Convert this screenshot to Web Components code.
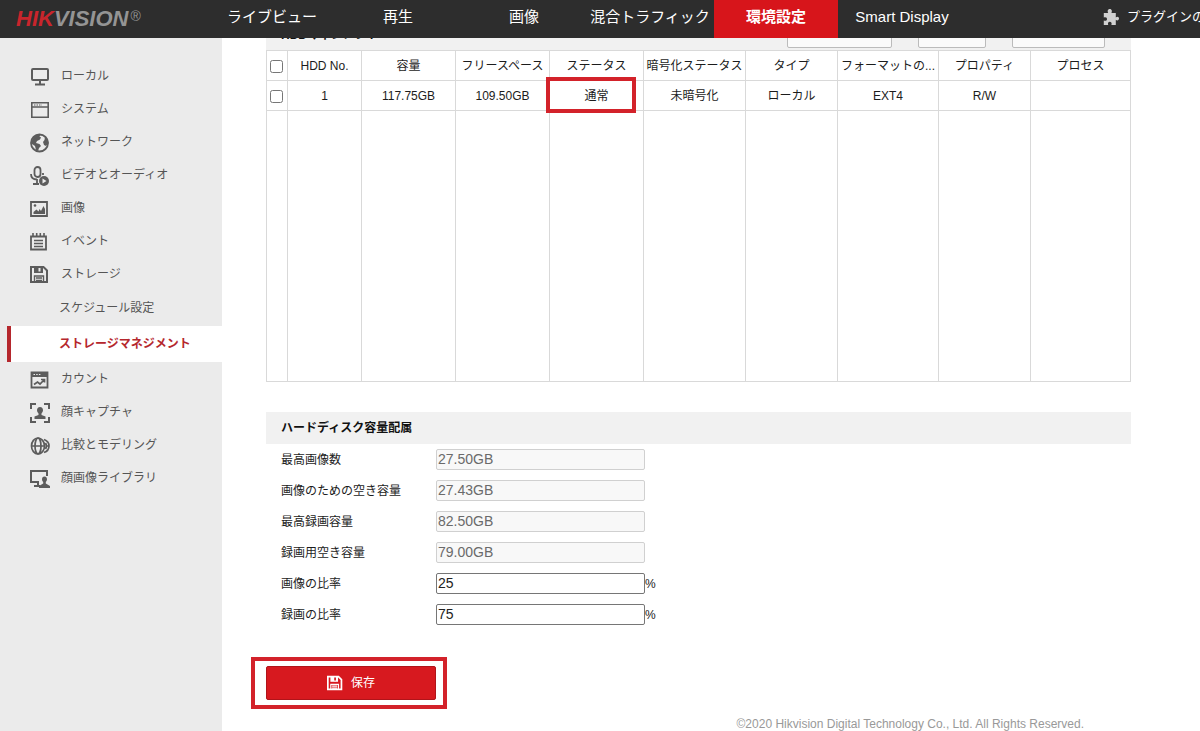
<!DOCTYPE html>
<html lang="ja">
<head>
<meta charset="utf-8">
<meta name="viewport" content="width=device-width, initial-scale=1">
<title>ストレージマネジメント</title>
<style>
    body {
        margin: 0;
        min-height: 100vh;
        display: flex;
        flex-direction: column;
        background: #fff;
        color: #1c1c1c;
        font: 12px/18px "Liberation Sans", "Noto Sans CJK JP", sans-serif;
    }
    .page {
        flex: 1;
        display: grid;
        grid-template-columns: 222px minmax(0, 1fr);
    }
    main {
        padding: 0 69px 0 44px;
    }
</style>
</head>
<body>

<!-- TEMPLATES -->
<template id="top-bar-template">
<style>
    :host { display: block; background: #2d2d2d; color: #fff; }
    header { display: flex; align-items: center; height: 38px; overflow: hidden; }
    .logo {
        flex: none;
        box-sizing: border-box;
        width: 209px;
        padding-left: 16px;
        color: #949494;
        font-size: 22px;
        line-height: 36px;
        font-weight: bold;
        font-style: italic;
        text-decoration: none;
        white-space: nowrap;
    }
    .logo b { color: #c9252c; }
    .logo sup { font-size: 14px; font-weight: normal; font-style: normal; line-height: 14px; vertical-align: 5px; margin-left: 2px; }
    nav { display: flex; flex: 1; }
    .plugin {
        flex: none;
        display: flex;
        align-items: center;
        gap: 8px;
        width: 97px;
        height: 34px;
        margin-bottom: 4px;
        overflow: hidden;
        color: #fff;
        font-size: 13px;
        text-decoration: none;
        white-space: nowrap;
    }
    .plugin ui-icon { width: 16px; height: 16px; color: #d0d0d0; }
</style>
<header>
    <a class="logo" href="#"><b>HIK</b>VISION<sup>®</sup></a>
    <nav><slot></slot></nav>
    <a class="plugin" href="#"><ui-icon name="plugin"></ui-icon>プラグインの</a>
</header>
</template>

<template id="nav-tab-template">
<style>
    :host { display: block; flex: 0 1 126px; }
    a {
        display: block;
        height: 38px;
        color: #fff;
        font-size: 15px;
        line-height: 34px;
        text-align: center;
        text-decoration: none;
        white-space: nowrap;
    }
    :host([active]) a { margin: 0 1px; background: #d7151b; font-weight: bold; }
</style>
<a href="#"><slot></slot></a>
</template>

<template id="side-menu-template">
<style>
    :host { display: block; background: #ebebeb; }
    nav { padding: 21px 0; }
</style>
<nav><slot></slot></nav>
</template>

<template id="side-item-template">
<style>
    :host { display: block; }
    a {
        display: flex;
        align-items: center;
        gap: 11px;
        height: 33px;
        padding-left: 30px;
        color: #555;
        text-decoration: none;
        white-space: nowrap;
    }
    ui-icon { width: 20px; height: 20px; color: #5c5c5c; margin-top: 3px; }
    :host([sub]) a { height: 36px; padding-left: 59px; }
    :host([sub]) ui-icon { display: none; }
    :host([active]) a {
        margin-left: 7px;
        padding-left: 48px;
        border-left: 4px solid #b5272d;
        background: #fff;
        color: #b5272d;
        font-weight: bold;
    }
</style>
<a href="#"><ui-icon></ui-icon><slot></slot></a>
</template>

<template id="section-bar-template">
<style>
    :host { display: block; background: #f1f1f1; }
    div { display: flex; align-items: center; height: 32px; padding: 0 26px 0 15px; }
    h2 { flex: 1; margin: 0; font-size: 12px; line-height: 18px; color: #111; }
    .tools { display: flex; gap: 26px; }
    /* top edge is scrolled under the header */
    :host([scrolled]) { height: 12px; overflow: hidden; }
    :host([scrolled]) div { margin-top: -19px; }
    ::slotted(button) {
        box-sizing: border-box;
        height: 26px;
        border: 1px solid #bbb;
        border-radius: 2px;
        background: #fafafa;
    }
</style>
<div><h2><slot></slot></h2><span class="tools"><slot name="tools"></slot></span></div>
</template>

<template id="hdd-table-template">
<style>
    :host { display: block; padding-right: 1px; }
    table { width: 100%; border-collapse: collapse; table-layout: fixed; }
    th, td {
        box-sizing: border-box;
        height: 30px;
        padding: 0;
        border: 1px solid #d9d9d9;
        font-weight: normal;
        text-align: center;
        white-space: nowrap;
    }
    .filler td { height: 271px; }
    input { display: block; width: 13px; height: 13px; margin: 2px auto 0 3px; }
    .marked { position: relative; }
    .marked::after {
        content: "";
        position: absolute;
        inset: -4px 7px -3px -4px;
        border: 4px solid #d3222a;
    }
</style>
<table>
    <colgroup></colgroup>
    <thead></thead>
    <tbody></tbody>
</table>
</template>

<template id="capacity-field-template">
<style>
    :host { display: flex; align-items: center; height: 31px; padding-left: 15px; }
    label { width: 155px; }
    input {
        box-sizing: border-box;
        width: 209px;
        height: 21px;
        padding: 0 1px 2px;
        border: 1px solid #767676;
        border-radius: 2px;
        background: #fff;
        color: #222;
        font: 14px "Liberation Sans", sans-serif;
    }
    input:disabled { border-color: #d0d0d0; background: #f8f8f8; color: #6a6a6a; }
</style>
<label for="value"></label><input id="value" type="text"><slot></slot>
</template>

<template id="save-button-template">
<style>
    :host { display: flex; margin: 27px 0 0 -15px; }
    .mark { padding: 5px 7px 5px 11px; border: 4px solid #d3222a; }
    button {
        display: flex;
        align-items: center;
        justify-content: center;
        gap: 7px;
        width: 170px;
        height: 34px;
        padding: 0;
        border: 1px solid #b0141a;
        border-radius: 2px;
        background: #d7191f;
        color: #fff;
        font: inherit;
    }
    ui-icon { width: 17px; height: 17px; --hole: #d7191f; }
</style>
<div class="mark"><button type="button"><ui-icon name="save"></ui-icon><slot></slot></button></div>
</template>

<template id="page-footer-template">
<style>
    :host { display: block; padding: 9px 47px 0 0; color: #999; line-height: 13px; text-align: right; }
</style>
<slot></slot>
</template>

<!-- PAGE -->
<top-bar>
    <nav-tab>ライブビュー</nav-tab>
    <nav-tab>再生</nav-tab>
    <nav-tab>画像</nav-tab>
    <nav-tab>混合トラフィック</nav-tab>
    <nav-tab active>環境設定</nav-tab>
    <nav-tab>Smart Display</nav-tab>
</top-bar>
<div class="page">
    <side-menu>
        <side-item icon="monitor">ローカル</side-item>
        <side-item icon="window">システム</side-item>
        <side-item icon="globe">ネットワーク</side-item>
        <side-item icon="mic">ビデオとオーディオ</side-item>
        <side-item icon="image">画像</side-item>
        <side-item icon="event">イベント</side-item>
        <side-item icon="save">ストレージ</side-item>
        <side-item sub>スケジュール設定</side-item>
        <side-item sub active>ストレージマネジメント</side-item>
        <side-item icon="count">カウント</side-item>
        <side-item icon="face">顔キャプチャ</side-item>
        <side-item icon="compare">比較とモデリング</side-item>
        <side-item icon="library">顔画像ライブラリ</side-item>
    </side-menu>
    <main>
        <section-bar scrolled>HDDマネジメント
            <button slot="tools" type="button" aria-label="暗号化" style="width: 105px"></button>
            <button slot="tools" type="button" aria-label="設定" style="width: 68px"></button>
            <button slot="tools" type="button" aria-label="フォーマット" style="width: 93px"></button>
        </section-bar>
        <hdd-table></hdd-table>
        <section-bar style="margin-top: 30px">ハードディスク容量配属</section-bar>
        <capacity-field label="最高画像数" value="27.50GB" disabled></capacity-field>
        <capacity-field label="画像のための空き容量" value="27.43GB" disabled></capacity-field>
        <capacity-field label="最高録画容量" value="82.50GB" disabled></capacity-field>
        <capacity-field label="録画用空き容量" value="79.00GB" disabled></capacity-field>
        <capacity-field label="画像の比率" value="25">%</capacity-field>
        <capacity-field label="録画の比率" value="75">%</capacity-field>
        <save-button>保存</save-button>
        <page-footer>©2020 Hikvision Digital Technology Co., Ltd. All Rights Reserved.</page-footer>
    </main>
</div>

<script>
// every icon is drawn on a 20x20 grid
const icons = {
    monitor: `<g fill="none" stroke="currentColor" stroke-width="2"><rect x="2" y="2" width="16" height="11" rx="1"/><path d="M10 13v4M5 17.500h10"/></g>`,
    window: `<path fill="none" stroke="currentColor" stroke-width="1.600" d="M1.800 2.800h16.400v14.400H1.800zM2 7h16"/><path stroke="currentColor" stroke-dasharray="1.500 1" d="M4 5h8"/>`,
    globe: `<circle cx="9.500" cy="10" r="8.500" fill="none" stroke="currentColor" stroke-width="1.800"/><path fill="currentColor" d="M1.500 9c1-4 4-7.500 9-7.500l-1 2 1.500 1-1 2-3 1.500-1 2 3.500 1 1.500 2-2 2-1 3-2-1-1-4-3-2zM15 3.500l3 3.500 .5 3-2.500 3-2-1-1-3 1.500-2z"/>`,
    mic: `<g fill="none" stroke="currentColor" stroke-width="1.800"><rect x="4.500" y="1" width="6" height="10" rx="3"/><path d="M1 8c0 3 2 5.500 6 5.500M7 13v5M3 18h6M13 7v2"/></g><circle cx="14" cy="15" r="5" fill="currentColor"/><path fill="#ebebeb" d="M12.500 12.500l4 2.500-4 2.500z"/>`,
    image: `<path fill="none" stroke="currentColor" stroke-width="1.800" d="M1 3h16v14H1z"/><path fill="currentColor" d="M3.500 15v-2l3-2.500 2 2 1-2.500 1.500 2 2.500-5 1.500 3v5z"/><circle cx="5" cy="6.500" r="1.300" fill="currentColor"/>`,
    event: `<path fill="none" stroke="currentColor" stroke-width="1.800" d="M1 4.500h15v13H1z"/><path stroke="currentColor" stroke-width="1.600" d="M3 1v4M6.700 1v4M10.300 1v4M14 1v4"/><path stroke="currentColor" stroke-width="1.300" d="M4 8.500h9M4 11.500h9M4 14.500h9"/>`,
    save: `<path fill="none" stroke="currentColor" stroke-width="2" d="M1 2h12.500L17 5.500V17H1z"/><path fill="currentColor" d="M4 2h9v6H4z"/><path stroke="var(--hole, #ebebeb)" stroke-width="2" d="M9.500 3v3.500"/><path fill="none" stroke="currentColor" stroke-width="1.400" d="M4.500 17v-6h9v6M6 13h6M6 15.500h6"/>`,
    count: `<path fill="none" stroke="currentColor" stroke-width="1.800" d="M1.500 2.500h16v15h-16z"/><path fill="currentColor" d="M2 2h15v5H2z"/><path stroke="#ebebeb" stroke-dasharray="1.500 1.200" d="M3.500 4.500h8"/><path fill="none" stroke="currentColor" stroke-width="1.700" d="M4 14.500l3.500-2.500 2.500 2 4-4M11 9.500h3.500v3"/>`,
    face: `<path fill="none" stroke="currentColor" stroke-width="2" d="M1 6V1h5M14 1h5v5M19 14v5h-5M6 19H1v-5"/><path fill="currentColor" d="M10 4c2 0 3 1.500 3 3.300 0 1.500-1 2.500-1.500 3.200v1.500l4 1.500V16h-11v-2.500l4-1.500v-1.500C8 9.800 7 8.800 7 7.300 7 5.500 8 4 10 4z"/>`,
    compare: `<g fill="none" stroke="currentColor" stroke-width="1.700"><ellipse cx="8" cy="10" rx="6.500" ry="8"/><ellipse cx="8" cy="10" rx="3" ry="8"/><path d="M1.500 10h13M14 3.500c3 1 5 3.500 5 6.500s-2 5.500-5 6.500M15.500 7c1.300 2 1.300 4 0 6M16 10h3"/></g>`,
    library: `<path fill="none" stroke="currentColor" stroke-width="2" d="M9 13H1V2h16v5M4 17h6M8 13v4"/><path fill="currentColor" d="M14.500 7.500c1.700 0 2.500 1.300 2.500 2.700s-.8 2.300-1.200 2.800v1.500L20 17v2H9v-2l4.200-2.500V13c-.5-.5-1.200-1.400-1.200-2.800s.8-2.700 2.500-2.700z"/>`,
    plugin: `<path fill="currentColor" d="M1 5h5.500C5 2 6.500 0 8.500 0s3.500 2 2 5H16v5.500c2-1.500 4-.5 4 1.500s-2 3-4 1.500V20h-5.500c1-3-.5-4-2-4s-3 1-2 4H1v-5.500c3 1 4-.5 4-2s-1-3-4-2z"/>`
};

/* Base for all the elements, clones the template that has the
   same name as the tag into an open shadow root */
class TemplateElement extends HTMLElement {
    constructor() {
        super();
        const shadowRoot = this.attachShadow({mode: 'open'});
        const template = document.querySelector('#' + this.localName + '-template');
        shadowRoot.appendChild(template.content.cloneNode(true));
    }
}

class UiIcon extends HTMLElement {
    constructor() {
        super();
        this.attachShadow({mode: 'open'});
    }
    static get observedAttributes() {
        return ['name'];
    }
    attributeChangedCallback() {
        this.shadowRoot.innerHTML = `
            <style>
                :host { display: block; flex: none; }
                svg { display: block; width: 100%; height: 100%; }
            </style>
            <svg viewBox="0 0 20 20" aria-hidden="true">${icons[this.getAttribute('name')] || ''}</svg>`;
    }
}
window.customElements.define('ui-icon', UiIcon);

class TopBar extends TemplateElement {}
window.customElements.define('top-bar', TopBar);

class NavTab extends TemplateElement {}
window.customElements.define('nav-tab', NavTab);

class SideMenu extends TemplateElement {}
window.customElements.define('side-menu', SideMenu);

class SideItem extends TemplateElement {
    connectedCallback() {
        if (this.hasAttribute('icon')) {
            this.shadowRoot.querySelector('ui-icon').setAttribute('name', this.getAttribute('icon'));
        }
    }
}
window.customElements.define('side-item', SideItem);

class SectionBar extends TemplateElement {}
window.customElements.define('section-bar', SectionBar);

// column title, width, value of the one disk
const columns = [
    ['HDD No.', 74, '1'],
    ['容量', 94, '117.75GB'],
    ['フリースペース', 94, '109.50GB'],
    ['ステータス', 94, '通常'],
    ['暗号化ステータス', 102, '未暗号化'],
    ['タイプ', 92, 'ローカル'],
    ['フォーマットの...', 101, 'EXT4'],
    ['プロパティ', 92, 'R/W'],
    ['プロセス', 100, '']
];

class HddTable extends TemplateElement {
    connectedCallback() {
        const root = this.shadowRoot;
        root.querySelector('colgroup').innerHTML =
            '<col style="width: 21px">' + columns.map(c => `<col style="width: ${c[1]}px">`).join('');
        root.querySelector('thead').innerHTML =
            '<tr><th><input type="checkbox" aria-label="すべて選択"></th>' +
            columns.map(c => `<th>${c[0]}</th>`).join('') + '</tr>';
        root.querySelector('tbody').innerHTML =
            '<tr><td><input type="checkbox" aria-label="HDD 1"></td>' +
            columns.map(c => `<td${c[2] === '通常' ? ' class="marked"' : ''}>${c[2]}</td>`).join('') + '</tr>' +
            '<tr class="filler">' + '<td></td>'.repeat(columns.length + 1) + '</tr>';
    }
}
window.customElements.define('hdd-table', HddTable);

class CapacityField extends TemplateElement {
    connectedCallback() {
        const input = this.shadowRoot.querySelector('input');
        this.shadowRoot.querySelector('label').textContent = this.getAttribute('label');
        input.value = this.getAttribute('value');
        input.disabled = this.hasAttribute('disabled');
    }
}
window.customElements.define('capacity-field', CapacityField);

class SaveButton extends TemplateElement {}
window.customElements.define('save-button', SaveButton);

class PageFooter extends TemplateElement {}
window.customElements.define('page-footer', PageFooter);
</script>
</body>
</html>
